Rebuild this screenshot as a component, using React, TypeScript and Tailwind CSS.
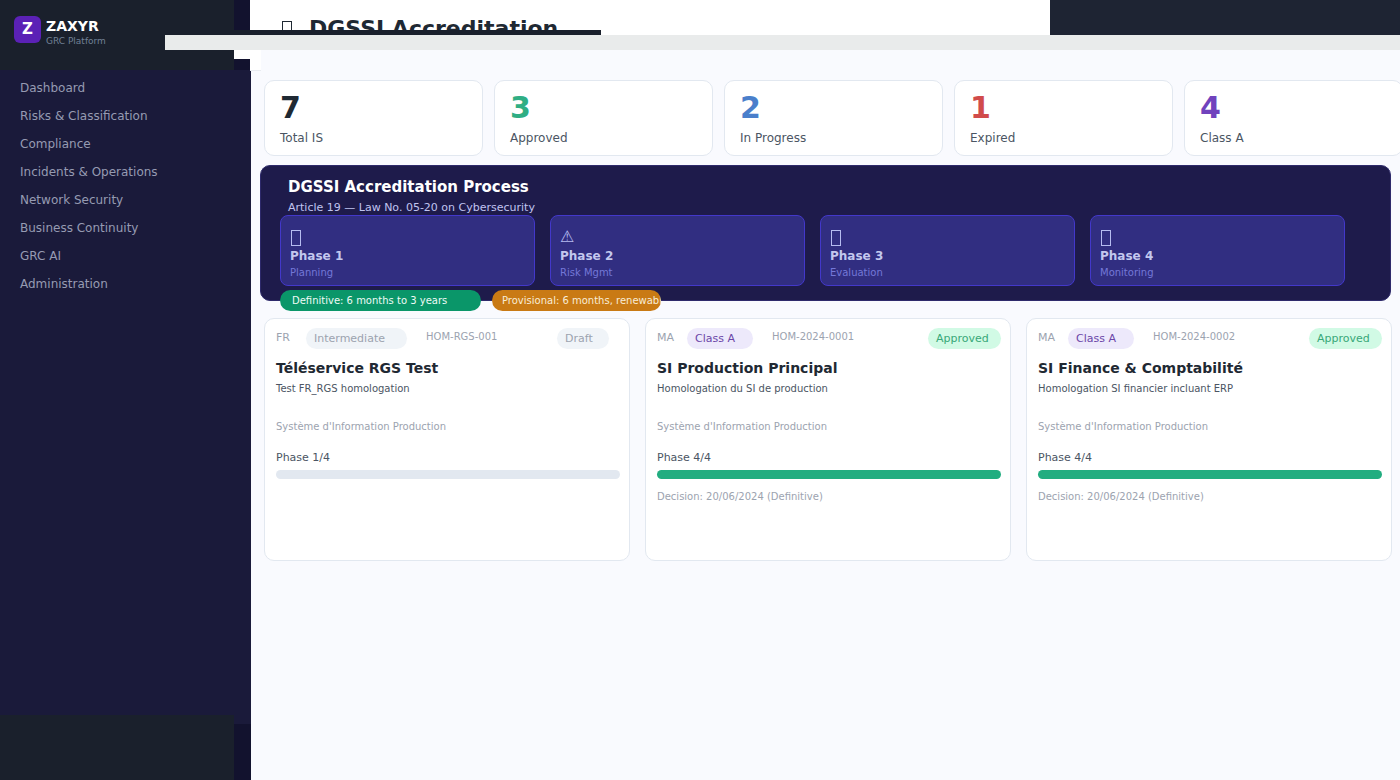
const navItems = [
  'Dashboard',
  'Risks & Classification',
  'Compliance',
  'Incidents & Operations',
  'Network Security',
  'Business Continuity',
  'GRC AI',
  'Administration',
];

const stats = [
  { value: '7', label: 'Total IS', color: 'text-[#1f2933]' },
  { value: '3', label: 'Approved', color: 'text-[#2fae84]' },
  { value: '2', label: 'In Progress', color: 'text-[#4a7fcb]' },
  { value: '1', label: 'Expired', color: 'text-[#d14b4b]' },
  { value: '4', label: 'Class A', color: 'text-[#7043bd]' },
];

// icon null = the missing-glyph box the reference shows
const phases = [
  { icon: null, title: 'Phase 1', sub: 'Planning' },
  { icon: '⚠', title: 'Phase 2', sub: 'Risk Mgmt' },
  { icon: null, title: 'Phase 3', sub: 'Evaluation' },
  { icon: null, title: 'Phase 4', sub: 'Monitoring' },
];

const cards = [
  {
    country: 'FR',
    level: 'Intermediate',
    levelClass: 'bg-[#f0f4f8] text-[#9ca3af] w-[101px]',
    ref: 'HOM-RGS-001',
    status: 'Draft',
    statusClass: 'bg-[#f0f4f8] text-[#9ca3af] w-[52px] mr-[11px]',
    title: 'Téléservice RGS Test',
    desc: 'Test FR_RGS homologation',
    phase: 'Phase 1/4',
    done: false,
    decision: '',
  },
  {
    country: 'MA',
    level: 'Class A',
    levelClass: 'bg-[#ede9fb] text-[#6b46a8] w-[66px]',
    ref: 'HOM-2024-0001',
    status: 'Approved',
    statusClass: 'bg-[#d1fae5] text-[#38a878] w-[73px]',
    title: 'SI Production Principal',
    desc: 'Homologation du SI de production',
    phase: 'Phase 4/4',
    done: true,
    decision: 'Decision: 20/06/2024 (Definitive)',
  },
  {
    country: 'MA',
    level: 'Class A',
    levelClass: 'bg-[#ede9fb] text-[#6b46a8] w-[66px]',
    ref: 'HOM-2024-0002',
    status: 'Approved',
    statusClass: 'bg-[#d1fae5] text-[#38a878] w-[73px]',
    title: 'SI Finance & Comptabilité',
    desc: 'Homologation SI financier incluant ERP',
    phase: 'Phase 4/4',
    done: true,
    decision: 'Decision: 20/06/2024 (Definitive)',
  },
];

function Sidebar() {
  return (
    <aside className="w-[251px] h-[780px] shrink-0 flex flex-col bg-[#1a1a3a]">
      <div className="w-[234px] h-[70px] bg-[#1a202c] flex items-start pl-[14px] pt-[16px] gap-[5px] shrink-0">
        <div className="w-[27px] h-[27px] rounded-[6px] bg-[#5b21b6] flex items-center justify-center text-white text-[15px] font-bold">
          Z
        </div>
        <div className="flex flex-col">
          <span className="text-white text-[14px] font-bold leading-[17px] mt-[2px]">ZAXYR</span>
          <span className="text-[#718096] text-[9px] leading-[10px] mt-[1px]">GRC Platform</span>
        </div>
      </div>
      <nav className="flex flex-col flex-1 pt-[4px]">
        {navItems.map((item) => (
          <div key={item} className="h-[28px] pl-[20px] flex items-center text-[12px] text-[#969bb2]">
            {item}
          </div>
        ))}
      </nav>
      <div className="flex h-[65px] shrink-0">
        <div className="w-[234px] bg-[#1a202c]" />
        <div className="flex-1 flex flex-col">
          <div className="h-[9px] bg-[#1a1a3a]" />
          <div className="flex-1 bg-[#12122e]" />
        </div>
      </div>
    </aside>
  );
}

function StatCard({ value, label, color }: { value: string; label: string; color: string }) {
  return (
    <div className="w-[219px] h-[76px] shrink-0 bg-white border border-[#e2e8f0] rounded-[10px] pl-[15px] pt-[9px]">
      <div className={`text-[30px] font-bold leading-[36px] ${color}`}>{value}</div>
      <div className="text-[12px] leading-[15px] mt-[5px] text-[#4b5563]">{label}</div>
    </div>
  );
}

function PhaseCard({ icon, title, sub }: { icon: string | null; title: string; sub: string }) {
  return (
    <div className="w-[255px] h-[71px] shrink-0 rounded-[8px] bg-[#312e81] border border-[#4338ca] pl-[9px] pt-[11px]">
      <div className={`h-[20px] text-[16px] leading-[20px] text-[#b6bcf0] ${icon ? '' : 'pt-[3px] pl-px'}`}>
        {icon ?? <div className="w-[10px] h-[16px] border border-[#b6bcf0]" />}
      </div>
      <div className="text-[12px] font-bold leading-[15px] mt-[2px] text-[#c3c8ee]">{title}</div>
      <div className="text-[10px] leading-[12px] mt-[3px] text-[#7478d8]">{sub}</div>
    </div>
  );
}

function ProjectCard({ card }: { card: (typeof cards)[number] }) {
  return (
    <div className="w-[366px] h-[243px] bg-white border border-[#e2e8f0] rounded-[10px] pl-[11px] pr-[9px] pt-[9px]">
      <div className="flex items-start h-[21px]">
        <span className="text-[11px] leading-[19px] text-[#9ca3af] w-[30px]">{card.country}</span>
        <span className={`h-[21px] rounded-full pl-[8px] text-[11px] leading-[21px] ${card.levelClass}`}>{card.level}</span>
        <span className="text-[10px] leading-[18px] text-[#9ca3af] ml-[19px]">{card.ref}</span>
        <span className={`ml-auto h-[21px] rounded-full pl-[8px] text-[11px] leading-[21px] ${card.statusClass}`}>
          {card.status}
        </span>
      </div>
      <h3 className="text-[14px] font-bold leading-[18px] mt-[10px] text-[#1f2933]">{card.title}</h3>
      <p className="text-[10px] leading-[12px] mt-[6px] text-[#4b5563]">{card.desc}</p>
      <p className="text-[10px] leading-[12px] mt-[26px] text-[#9ca3af]">Système d'Information Production</p>
      <p className="text-[11px] leading-[14px] mt-[18px] text-[#4b5563]">{card.phase}</p>
      <div className={`h-[9px] rounded-full mt-[5px] ${card.done ? 'bg-[#22ad80]' : 'bg-[#e2e8f0]'}`} />
      {card.decision && (
        <p className="text-[10px] leading-[12px] mt-[12px] text-[#9ca3af]">{card.decision}</p>
      )}
    </div>
  );
}

export default function App() {
  return (
    <div className="relative flex w-[1400px] h-[780px] overflow-hidden bg-[#f9fafe] font-['DejaVu_Sans',sans-serif]">
      <Sidebar />
      <main className="flex-1 min-w-0 flex flex-col">
        <header className="flex h-[35px] shrink-0 -ml-px">
          <div className="w-[800px] bg-white pl-[32px] pt-[15px] overflow-hidden flex items-start gap-[17px]">
            <div className="w-[10px] h-[18px] mt-[6px] shrink-0 border border-[#1f2933]" />
            <h1 className="text-[22px] font-bold leading-[28px] text-[#1f2933]">DGSSI Accreditation</h1>
          </div>
          <div className="flex-1 bg-[#1e2433]" />
        </header>
        <div className="h-[15px] shrink-0" />
        <div className="flex-1 pl-[13px] pt-[30px]">
          <div className="flex gap-[11px] w-[1200px]">
            {stats.map((s) => (
              <StatCard key={s.label} {...s} />
            ))}
          </div>
          <section className="relative w-[1131px] h-[136px] -ml-[4px] mt-[9px] rounded-[10px] bg-[#1e1b4b] border border-[#2e2a6b] pl-[27px] pt-[11px]">
            <h2 className="text-[15px] font-bold leading-[20px] text-white">DGSSI Accreditation Process</h2>
            <p className="text-[11px] leading-[14px] mt-[4px] text-[#c0c4f0]">Article 19 — Law No. 05-20 on Cybersecurity</p>
            <div className="flex gap-[15px] -ml-[8px]">
              {phases.map((p) => (
                <PhaseCard key={p.title} {...p} />
              ))}
            </div>
            <div className="flex gap-[11px] -ml-[8px] mt-[4px]">
              <span className="w-[201px] h-[21px] rounded-full bg-[#0a9669] pl-[12px] text-[10px] leading-[22px] text-[#eefaf5]">
                Definitive: 6 months to 3 years
              </span>
              <span className="w-[169px] h-[21px] rounded-full bg-[#c97a14] pl-[10px] text-[10px] leading-[22px] text-[#f8ecd6] whitespace-nowrap overflow-hidden">
                Provisional: 6 months, renewable
              </span>
            </div>
          </section>
          <div className="flex gap-[15px] mt-[17px]">
            {cards.map((c) => (
              <ProjectCard key={c.ref} card={c} />
            ))}
          </div>
        </div>
      </main>
      {/* stray bars from the broken header, sitting over the page */}
      <div className="absolute left-[234px] top-0 w-[16px] h-[30px] bg-[#12122e]" />
      <div className="absolute left-[234px] top-[30px] w-[367px] h-[5px] bg-[#1a202c]" />
      <div className="absolute left-[165px] top-[35px] right-0 h-[15px] bg-[#e9ebeb]" />
      <div className="absolute left-[234px] top-[50px] w-[16px] h-[9px] bg-white" />
      <div className="absolute left-[234px] top-[59px] w-[16px] h-[11px] bg-[#12122e]" />
      <div className="absolute left-[250px] top-[50px] w-[11px] h-[21px] bg-white border-b border-[#e8ebf0]" />
    </div>
  );
}
